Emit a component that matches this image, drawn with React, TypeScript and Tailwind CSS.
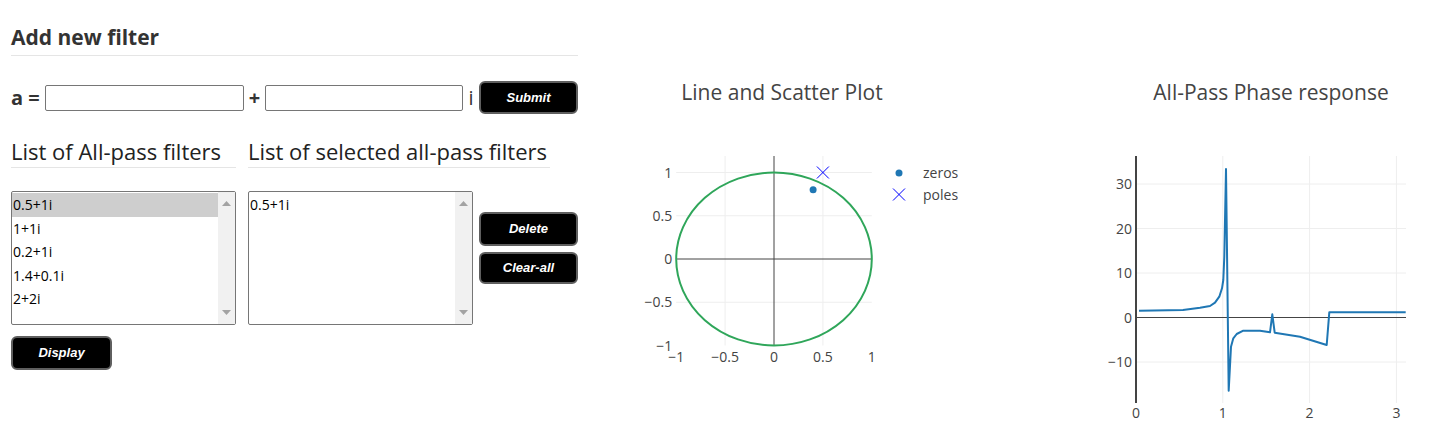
import React from "react";

const available = ["0.5+1i", "1+1i", "0.2+1i", "1.4+0.1i", "2+2i"];
const selected = ["0.5+1i"];

// phase curve, traced in plot pixel space
const phasePts: [number, number][] = [
  [1139, 310.7], [1183, 310], [1200, 307.7], [1210, 306], [1215, 302.7],
  [1219.3, 296.7], [1222, 288.3], [1223.3, 280], [1224.3, 256.7], [1226, 169],
  [1228.7, 390.7], [1231, 346.7], [1233.3, 338.3], [1236.7, 334], [1243.3, 330.7],
  [1260, 330.7], [1270, 332.3], [1272.3, 314.3], [1274.7, 332.7], [1300, 336.7],
  [1326.7, 345], [1329.3, 312.3], [1405.7, 312.3],
];

const BlackButton = ({ label, className }: { label: string; className: string }) => (
  <button
    className={
      "bg-black text-white italic font-bold text-[13px] border-2 border-[#5f5f5f] rounded-[6px] flex items-center justify-center " +
      className
    }
    style={{ fontFamily: '"Liberation Sans", Arial, sans-serif' }}
  >
    {label}
  </button>
);

const ListBox = ({ items, highlight }: { items: string[]; highlight: boolean }) => (
  <div className="w-[225px] h-[134px] border border-[#767676] rounded-[2px] flex bg-white">
    <div className="flex-1 pt-[1px]">
      {items.map((it, i) => (
        <div
          key={it}
          className={
            "h-[23.6px] leading-[23.6px] text-[14px] text-black pl-[1px] " +
            (highlight && i === 0 ? "bg-[#cecece]" : "")
          }
        >
          {it}
        </div>
      ))}
    </div>
    <div className="w-[17px] bg-[#f1f1f1] flex flex-col justify-between items-center py-[9px]">
      <svg width="9" height="5" viewBox="0 0 9 5">
        <path d="M0 5 L4.5 0 L9 5 Z" fill="#a3a3a3" />
      </svg>
      <svg width="9" height="5" viewBox="0 0 9 5">
        <path d="M0 0 L4.5 5 L9 0 Z" fill="#a3a3a3" />
      </svg>
    </div>
  </div>
);

const tickFont = { fontFamily: '"Open Sans", sans-serif', fontSize: 14, fill: "#444" };
const titleFont = { fontFamily: '"Open Sans", sans-serif', fontSize: 21, fill: "#444" };

const ZPlanePlot = () => {
  // offset 620
  const cx = 154;
  const cy = 259;
  const sx = 97.8;
  const sy = 86.5;
  const X = (v: number) => cx + v * sx;
  const Y = (v: number) => cy - v * sy;
  return (
    <svg width="460" height="426" className="block">
      <text x="162" y="100" textAnchor="middle" {...titleFont}>
        Line and Scatter Plot
      </text>
      {[-0.5, 0.5, 1].map((v) => (
        <line key={"h" + v} x1={X(-1)} x2={X(1)} y1={Y(v)} y2={Y(v)} stroke="#eee" />
      ))}
      {[-0.5, 0.5].map((v) => (
        <line key={"v" + v} x1={X(v)} x2={X(v)} y1={156} y2={Y(-1)} stroke="#eee" />
      ))}
      <line x1={X(-1)} x2={X(1)} y1={cy} y2={cy} stroke="#444" />
      <line x1={cx} x2={cx} y1={156} y2={Y(-1)} stroke="#444" />
      <ellipse cx={cx} cy={cy} rx={sx} ry={sy} fill="none" stroke="#2fa65a" strokeWidth="2" />
      <circle cx={X(0.4)} cy={Y(0.8)} r="3.5" fill="#1f77b4" />
      <path
        d={`M${X(0.5) - 6} ${Y(1) - 6} L${X(0.5) + 6} ${Y(1) + 6} M${X(0.5) + 6} ${Y(1) - 6} L${X(0.5) - 6} ${Y(1) + 6}`}
        stroke="#0000ff"
        strokeWidth="1"
      />
      {[1, 0.5, 0, -0.5, -1].map((v) => (
        <text key={"yl" + v} x={X(-1) - 4} y={Y(v) + 5} textAnchor="end" {...tickFont}>
          {v < 0 ? "\u2212" + Math.abs(v) : String(v)}
        </text>
      ))}
      {[-1, -0.5, 0, 0.5, 1].map((v) => (
        <text key={"xl" + v} x={X(v)} y={362} textAnchor="middle" {...tickFont}>
          {v < 0 ? "\u2212" + Math.abs(v) : String(v)}
        </text>
      ))}
      <circle cx="279" cy="173" r="3.5" fill="#1f77b4" />
      <text x="303" y="178" {...tickFont}>zeros</text>
      <path d="M273 188.5 L285 200.5 M285 188.5 L273 200.5" stroke="#0000ff" strokeWidth="1" />
      <text x="303" y="199.5" {...tickFont}>poles</text>
    </svg>
  );
};

const PhasePlot = () => {
  const ox = 1080;
  const x0 = 1136 - ox;
  const sx = 86.8;
  const y0 = 317.5;
  const sy = 4.45;
  const right = 1406 - ox;
  const d = phasePts.map((p, i) => `${i ? "L" : "M"}${(p[0] - ox).toFixed(1)} ${p[1]}`).join(" ");
  return (
    <svg width="363" height="426" className="block">
      <text x="191" y="100" textAnchor="middle" {...titleFont}>
        All-Pass Phase response
      </text>
      {[30, 20, 10, -10].map((v) => (
        <line key={"h" + v} x1={x0} x2={right} y1={y0 - v * sy} y2={y0 - v * sy} stroke="#eee" />
      ))}
      {[1, 2, 3].map((v) => (
        <line key={"v" + v} x1={x0 + v * sx} x2={x0 + v * sx} y1={156} y2={403} stroke="#eee" />
      ))}
      <line x1={x0} x2={right} y1={y0} y2={y0} stroke="#444" />
      <path d={d} fill="none" stroke="#1f77b4" strokeWidth="2" strokeLinejoin="round" />
      <line x1={x0} x2={x0} y1={156} y2={403} stroke="#444" strokeWidth="2" />
      {[30, 20, 10, 0, -10].map((v) => (
        <text key={"yl" + v} x={x0 - 4} y={y0 - v * sy + 5} textAnchor="end" {...tickFont}>
          {v < 0 ? "\u2212" + Math.abs(v) : String(v)}
        </text>
      ))}
      {[0, 1, 2, 3].map((v) => (
        <text key={"xl" + v} x={x0 + v * sx} y={418} textAnchor="middle" {...tickFont}>
          {v}
        </text>
      ))}
    </svg>
  );
};

export default function App() {
  return (
    <div className="w-[1443px] h-[426px] bg-white flex overflow-hidden" style={{ fontFamily: '"Open Sans", sans-serif' }}>
      <div className="w-[620px] pl-[11px]">
        <div className="w-[567px]">
          <h2 className="h-[56px] pt-[24px] border-b border-[#e5e5e5] text-[21px] leading-[26px] font-bold text-[#333]">
            Add new filter
          </h2>

          <div className="mt-[25px] h-[33px] flex items-center text-[20px] text-[#333]">
            <span className="w-[34px] font-bold">a =</span>
            <input className="w-[199px] h-[26px] border border-[#767676] rounded-[2px] bg-white" />
            <span className="w-[21px] text-center font-bold">+</span>
            <input className="w-[198px] h-[26px] border border-[#767676] rounded-[2px] bg-white" />
            <span className="w-[16px] text-center">i</span>
            <BlackButton label="Submit" className="w-[99px] h-[33px]" />
          </div>

          <div className="mt-[24px] flex gap-[12px] text-[#222]">
            <h3 className="w-[225px] h-[30px] border-b border-[#e5e5e5] text-[22px] leading-[26px] whitespace-nowrap">
              List of All-pass filters
            </h3>
            <h3 className="w-[302px] h-[30px] border-b border-[#e5e5e5] text-[22px] leading-[26px] whitespace-nowrap">
              List of selected all-pass filters
            </h3>
          </div>

          <div className="mt-[23px] flex items-start">
            <ListBox items={available} highlight />
            <div className="ml-[12px]">
              <ListBox items={selected} highlight={false} />
            </div>
            <div className="ml-[6px] mt-[21px] flex flex-col gap-[6px]">
              <BlackButton label="Delete" className="w-[99px] h-[34px]" />
              <BlackButton label="Clear-all" className="w-[99px] h-[32px]" />
            </div>
          </div>

          <BlackButton label="Display" className="mt-[11px] w-[101px] h-[34px]" />
        </div>
      </div>
      <ZPlanePlot />
      <PhasePlot />
    </div>
  );
}
